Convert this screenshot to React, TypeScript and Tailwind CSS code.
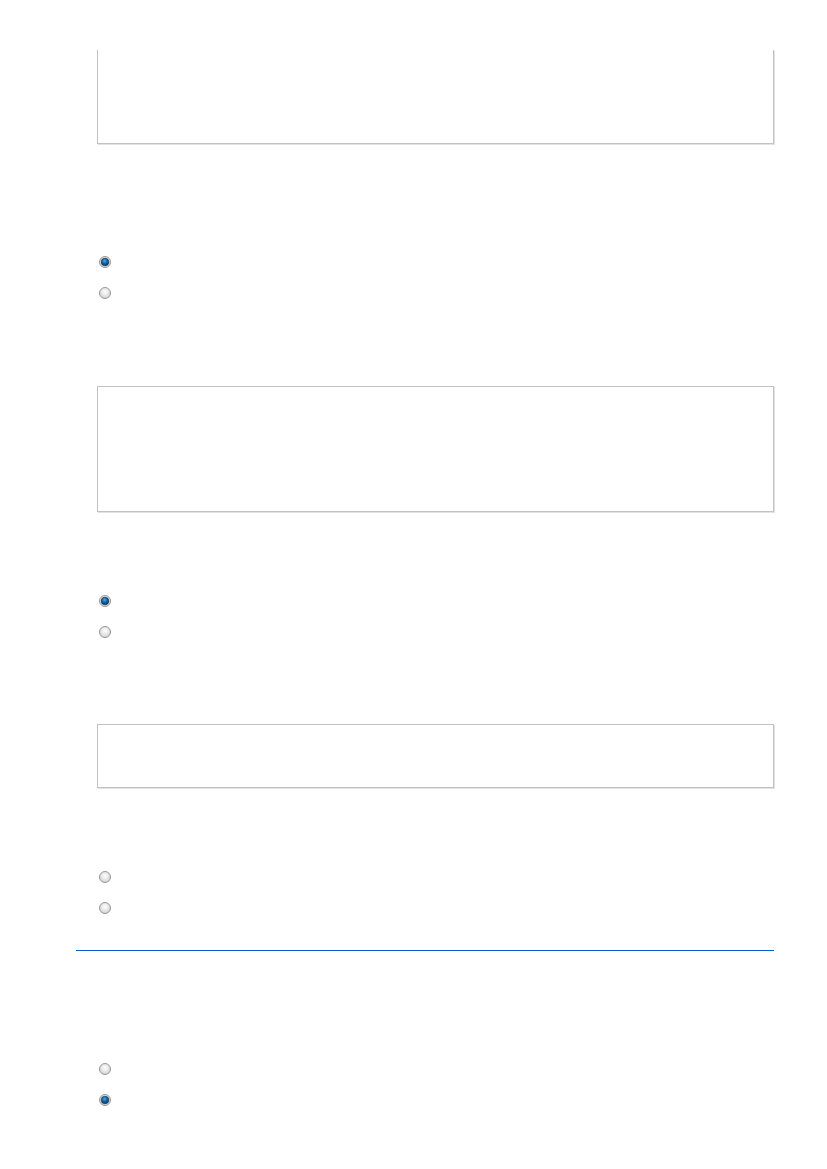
import React from "react";

function Radio({ checked }: { checked?: boolean }) {
  const id = checked ? "rOn" : "rOff";
  return (
    <svg width="12" height="12" viewBox="0 0 12 12" className="block">
      <defs>
        <radialGradient id={`${id}-bg`} cx="50%" cy="40%" r="60%">
          <stop offset="0%" stopColor="#ffffff" />
          <stop offset="100%" stopColor="#d2d2d2" />
        </radialGradient>
        <radialGradient id={`${id}-dot`} cx="45%" cy="35%" r="65%">
          <stop offset="0%" stopColor="#4fa6e2" />
          <stop offset="55%" stopColor="#12609c" />
          <stop offset="100%" stopColor="#0a3a66" />
        </radialGradient>
      </defs>
      <circle cx="6" cy="6" r="5.5" fill={`url(#${id}-bg)`} stroke="#989898" strokeWidth="1" />
      {checked && <circle cx="6" cy="6" r="3.8" fill={`url(#${id}-dot)`} stroke="#0c3a60" strokeWidth="0.7" />}
    </svg>
  );
}

function RadioPair({ selected }: { selected: 0 | 1 | null }) {
  return (
    <div className="flex flex-col gap-[19px] pl-[2px]">
      <label className="flex items-center gap-2 h-[12px]">
        <Radio checked={selected === 0} />
      </label>
      <label className="flex items-center gap-2 h-[12px]">
        <Radio checked={selected === 1} />
      </label>
    </div>
  );
}

export default function App() {
  return (
    <div className="min-h-[1169px] w-[827px] bg-white font-['Liberation_Sans',sans-serif]">
      <div className="flex flex-col pl-[97px] pt-[50px]">
        {/* answer box continued from previous page */}
        <div className="h-[94px] w-[677px] border-x border-b border-[#c2c2c2] shadow-[1px_1px_0_#e2e2e2]" />

        <div className="mt-[112px]">
          <RadioPair selected={0} />
        </div>

        <div className="mt-[87px] h-[126px] w-[677px] border border-[#c2c2c2] shadow-[1px_1px_0_#e2e2e2]" />

        <div className="mt-[83px]">
          <RadioPair selected={0} />
        </div>

        <div className="mt-[86px] h-[64px] w-[677px] border border-[#c2c2c2] shadow-[1px_1px_0_#e2e2e2]" />

        <div className="mt-[83px]">
          <RadioPair selected={null} />
        </div>

        {/* section divider */}
        <div className="mt-[36px] -ml-[21px] h-px w-[698px] bg-[#0b5fc4]" />

        <div className="mt-[112px]">
          <RadioPair selected={1} />
        </div>
      </div>
    </div>
  );
}
